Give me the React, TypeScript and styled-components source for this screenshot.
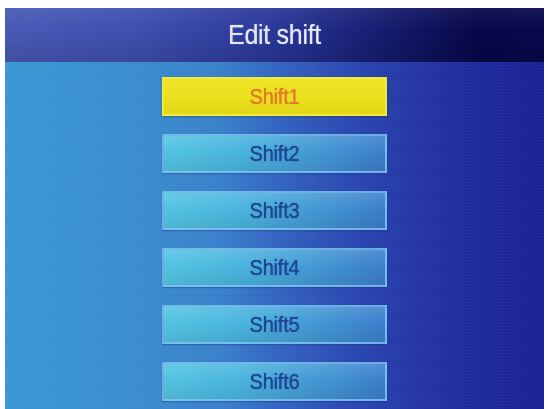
import React from "react";
import styled, { createGlobalStyle } from "styled-components";

const Global = createGlobalStyle`
  html, body { margin: 0; padding: 0; background: #ffffff; }
  body { font-family: "Liberation Sans", Arial, sans-serif; }
`;

const Screen = styled.div`
  margin: 8px 4px 0 5px;
  height: 401px;
  display: flex;
  flex-direction: column;
  overflow: hidden;
  filter: blur(0.5px);
`;

const Header = styled.div`
  height: 54px;
  flex: none;
  display: flex;
  align-items: center;
  justify-content: center;
  background:
    linear-gradient(180deg, rgba(255,255,255,0.06) 0%, rgba(0,0,0,0) 40%, rgba(0,0,0,0.12) 100%),
    linear-gradient(90deg, #4a5ab6 0%, #3f4fb0 25%, #2a379a 50%, #141a6c 72%, #07074a 88%, #080850 100%);
`;

const Title = styled.h1`
  margin: 0;
  font-family: "Liberation Sans", Arial, sans-serif;
  font-weight: normal;
  font-size: 25px;
  color: #e4e8f6;
  transform: scaleY(1.12);
  letter-spacing: -0.3px;
  padding-bottom: 2px;
  text-shadow: 0 0 1px rgba(230, 235, 250, 0.7);
`;

const Body = styled.div`
  flex: 1;
  display: flex;
  flex-direction: column;
  align-items: center;
  gap: 18px;
  padding-top: 15px;
  background:
    repeating-linear-gradient(180deg, rgba(255,255,255,0.025) 0px, rgba(255,255,255,0.025) 1px, rgba(0,0,0,0) 1px, rgba(0,0,0,0) 3px),
    linear-gradient(90deg, #3a98d4 0%, #3b8ecf 22%, #3a80cb 40%, #3466c2 50%, #2d4cb4 62%, #2538a6 75%, #1f2a9c 88%, #1b2294 100%);
`;

const Item = styled.div<{ $active?: boolean }>`
  width: 225px;
  height: 39px;
  box-sizing: border-box;
  display: flex;
  align-items: center;
  justify-content: center;
  font-family: "Liberation Sans", Arial, sans-serif;
  font-size: 20px;
  letter-spacing: -0.2px;
  border: 2px solid ${(p) => (p.$active ? "#f0ea40" : "rgba(125,190,240,0.75)")};
  color: ${(p) => (p.$active ? "#e2782a" : "#1f4592")};
  background: ${(p) =>
    p.$active
      ? "linear-gradient(180deg, #efe62a 0%, #e9df1c 60%, #e2d618 100%)"
      : "linear-gradient(180deg, rgba(255,255,255,0.12) 0%, rgba(255,255,255,0) 45%, rgba(0,0,0,0.08) 100%), linear-gradient(90deg, #54c4e2 0%, #4ab4de 35%, #4397d4 70%, #3c7ecb 100%)"};
  box-shadow: ${(p) => (p.$active ? "0 1px 2px rgba(40,40,0,0.3)" : "0 1px 1px rgba(20,40,120,0.35)")};
`;

const Label = styled.span`
  transform: scaleY(1.08);
  text-shadow: 0 0 1px currentColor;
`;

const shifts = ["Shift1", "Shift2", "Shift3", "Shift4", "Shift5", "Shift6"];

export default function App() {
  return (
    <>
      <Global />
      <Screen>
        <Header>
          <Title>Edit shift</Title>
        </Header>
        <Body>
          {shifts.map((s, i) => (
            <Item key={s} $active={i === 0}>
              <Label>{s}</Label>
            </Item>
          ))}
        </Body>
      </Screen>
    </>
  );
}
